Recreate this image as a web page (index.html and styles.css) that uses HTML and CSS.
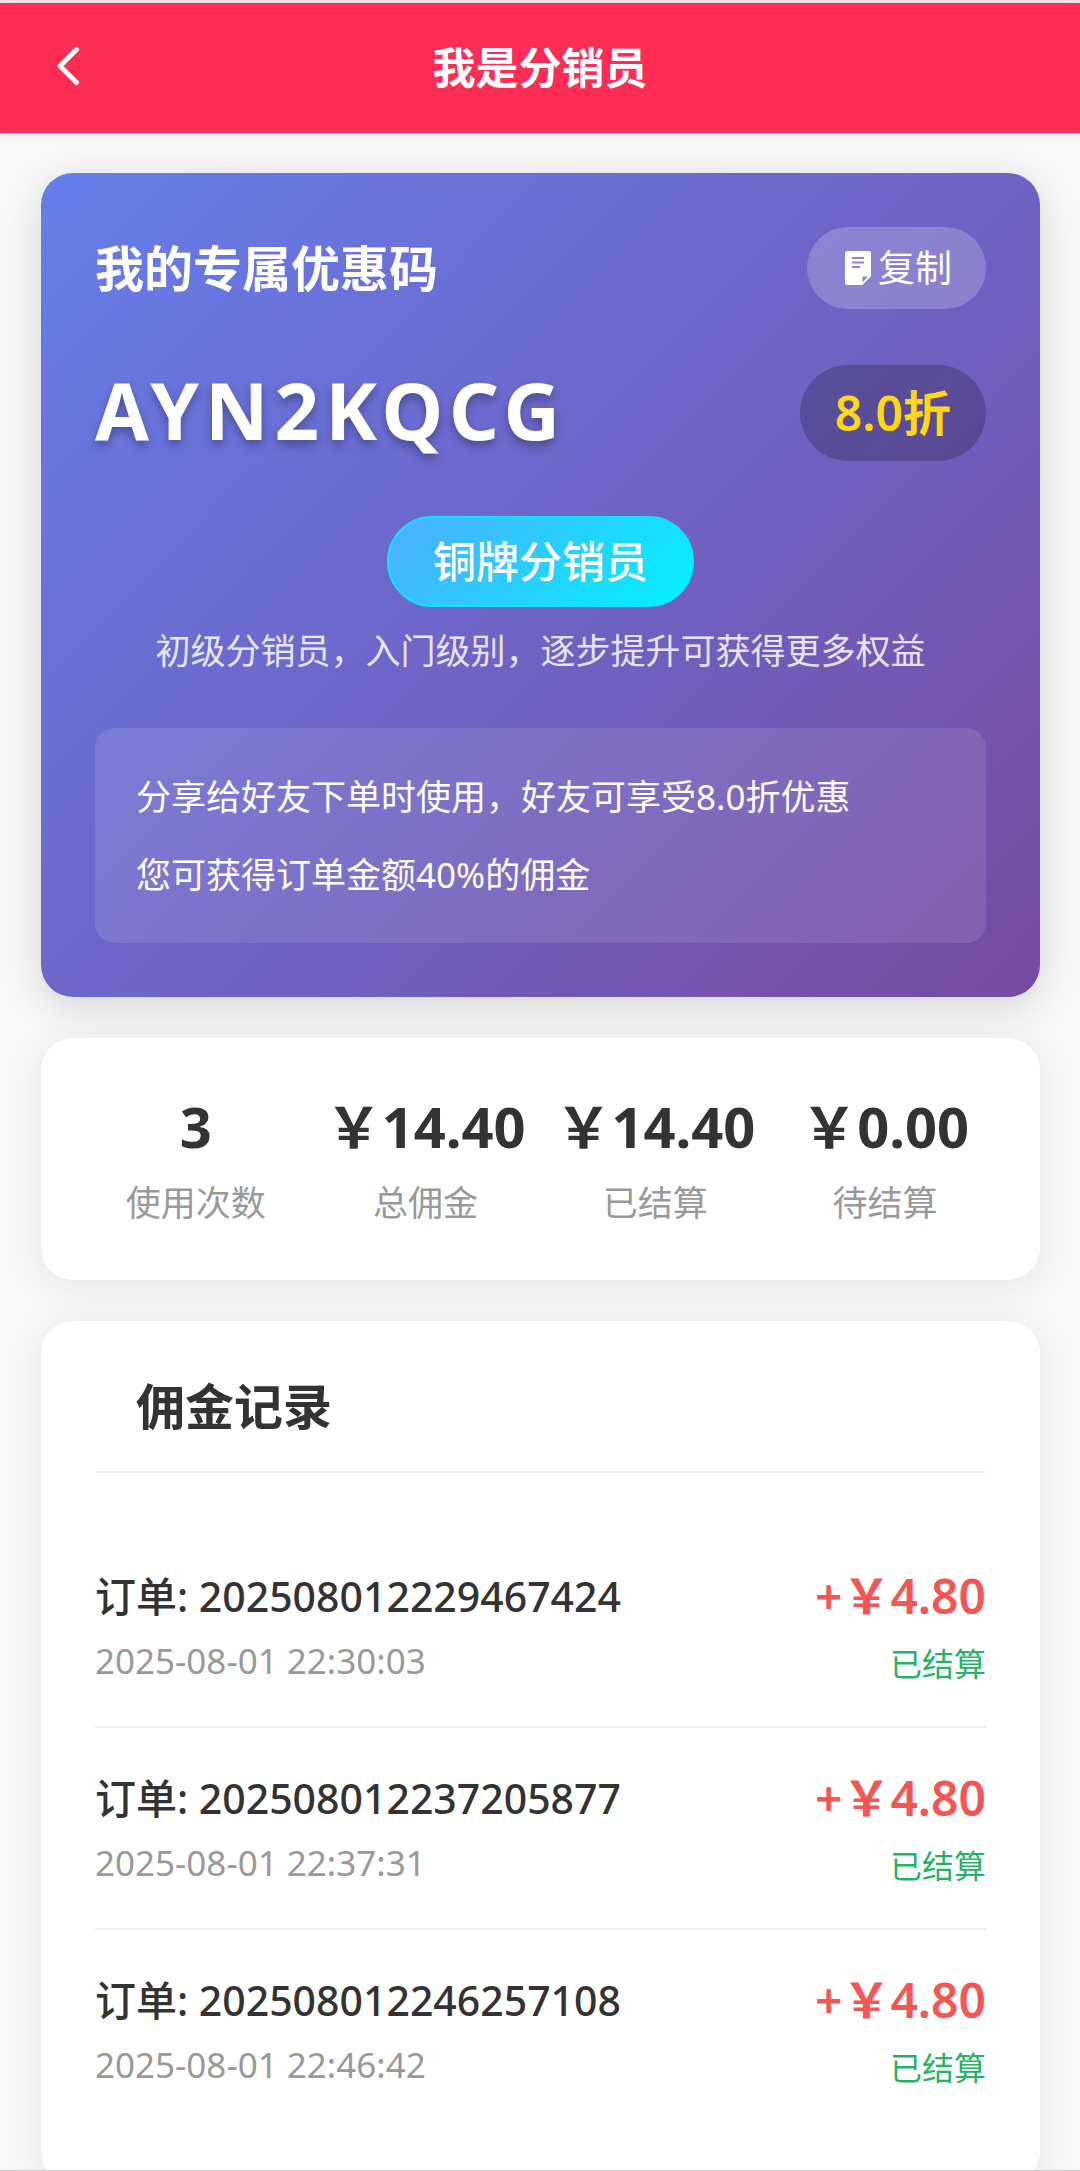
FILE: index.html
```html
<!DOCTYPE html>
<html lang="zh-CN">
<head>
<meta charset="utf-8">
<meta name="viewport" content="width=device-width, initial-scale=1">
<title>我是分销员</title>
<link rel="stylesheet" href="styles.css">
</head>
<body>
<div class="app">
  <header class="navbar">
    <button class="navbar-back" type="button" aria-label="返回">
      <svg width="24" height="40" viewBox="0 0 24 40" fill="none" stroke="#fff" stroke-width="5" stroke-linecap="round" stroke-linejoin="round"><path d="M20.500 3.500 4 20l16.500 16.500"/></svg>
    </button>
    <h1 class="navbar-title">我是分销员</h1>
  </header>

  <main class="content">
    <section class="coupon">
      <div class="coupon-row">
        <h2 class="coupon-title">我的专属优惠码</h2>
        <button class="copy-button" type="button">
          <svg width="26" height="34" viewBox="0 0 26 34"><path fill="#fff" fill-rule="evenodd" d="M2 0h22a2 2 0 0 1 2 2v23l-8.500 9H2a2 2 0 0 1-2-2V2a2 2 0 0 1 2-2Zm5 6v2h12V6Zm0 4.500v2h12v-2Zm0 4.500v2h8v-2Zm10.500 10.500v6l5.500-6Z"/></svg>
          <span>复制</span>
        </button>
      </div>
      <div class="coupon-row coupon-row-code">
        <strong class="coupon-code">AYN2KQCG</strong>
        <span class="discount">8.0折</span>
      </div>
      <div class="level">
        <span class="level-badge">铜牌分销员</span>
        <p class="level-text">初级分销员，入门级别，逐步提升可获得更多权益</p>
      </div>
      <div class="tips">
        <p>分享给好友下单时使用，好友可享受8.0折优惠</p>
        <p>您可获得订单金额40%的佣金</p>
      </div>
    </section>

    <section class="panel stats">
      <div class="stat"><strong>3</strong><span>使用次数</span></div>
      <div class="stat"><strong>￥14.40</strong><span>总佣金</span></div>
      <div class="stat"><strong>￥14.40</strong><span>已结算</span></div>
      <div class="stat"><strong>￥0.00</strong><span>待结算</span></div>
    </section>

    <section class="panel records">
      <h2 class="records-title">佣金记录</h2>
      <ul class="record-list">
        <li class="record">
          <div class="record-info"><span class="record-order">订单: 202508012229467424</span><time class="record-time">2025-08-01 22:30:03</time></div>
          <div class="record-result"><span class="record-amount">+￥4.80</span><span class="record-status">已结算</span></div>
        </li>
        <li class="record">
          <div class="record-info"><span class="record-order">订单: 202508012237205877</span><time class="record-time">2025-08-01 22:37:31</time></div>
          <div class="record-result"><span class="record-amount">+￥4.80</span><span class="record-status">已结算</span></div>
        </li>
        <li class="record">
          <div class="record-info"><span class="record-order">订单: 202508012246257108</span><time class="record-time">2025-08-01 22:46:42</time></div>
          <div class="record-result"><span class="record-amount">+￥4.80</span><span class="record-status">已结算</span></div>
        </li>
      </ul>
    </section>
  </main>
</div>
</body>
</html>
```
FILE: styles.css
```css
* {
  box-sizing: border-box;
}

body,
h1,
h2,
p,
ul {
  margin: 0;
  padding: 0;
}

body {
  background: #f8f8f8;
  color: #333;
  font-family: "Noto Sans", "Noto Sans CJK SC", sans-serif;
  font-size: 35px;
}

button {
  border: 0;
  padding: 0;
  color: inherit;
  font: inherit;
  cursor: pointer;
}

svg {
  display: block;
}

.app {
  display: flex;
  flex-direction: column;
  height: 100vh;
  border-top: 3px solid #ebe6e8;
  border-bottom: 1px solid #c8c8c8;
}

/* Top bar */
.navbar {
  position: relative;
  z-index: 1;
  flex: none;
  display: grid;
  grid-template-columns: 80px 1fr 80px;
  align-items: center;
  height: 130px;
  padding: 0 16px;
  background: #ff2c55;
  color: #fff;
  box-shadow: 0 2px 12px rgba(0, 0, 0, 0.06);
}

.navbar-back {
  display: flex;
  align-items: center;
  justify-content: center;
  height: 80px;
  padding: 0 0 4px 24px;
  background: none;
}

.navbar-title {
  font-size: 43px;
  font-weight: 700;
  line-height: 64px;
  text-align: center;
}

.content {
  flex: 1;
  min-height: 0;
  display: flex;
  flex-direction: column;
  gap: 41px;
  padding: 40px 40px 0 41px;
  overflow-y: auto;
  scrollbar-width: none;
}

.content > * {
  flex: none;
}

/* Coupon card */
.coupon {
  padding: 54px;
  border-radius: 32px;
  background: linear-gradient(135deg, #667eea 0%, #764ba2 100%);
  box-shadow: 0 10px 42px rgba(0, 0, 0, 0.15);
  color: #fff;
}

.coupon-row {
  display: flex;
  align-items: center;
  justify-content: space-between;
}

.coupon-row-code {
  margin-top: 56px;
}

.coupon-title {
  font-size: 49px;
  font-weight: 700;
  line-height: 72px;
}

.copy-button {
  display: flex;
  align-items: center;
  gap: 7px;
  height: 82px;
  padding: 0 34px 0 38px;
  border-radius: 41px;
  background: rgba(255, 255, 255, 0.2);
  font-size: 37px;
  line-height: 56px;
}

.coupon-code {
  padding-bottom: 6px;
  font-size: 78px;
  font-weight: 700;
  line-height: 90px;
  letter-spacing: 6px;
  text-shadow: 0 5px 10px rgba(0, 0, 0, 0.3);
}

.discount {
  padding: 0 35px;
  border-radius: 48px;
  background: rgba(0, 0, 0, 0.2);
  color: #ffd712;
  font-size: 48px;
  font-weight: 600;
  line-height: 96px;
}

.level {
  display: flex;
  flex-direction: column;
  align-items: center;
  gap: 18px;
  margin-top: 55px;
}

.level-badge {
  padding: 0 44px;
  border: 2px solid #10e4fe;
  border-radius: 46px;
  background: linear-gradient(135deg, #4facfe 0%, #00f2fe 100%);
  font-size: 43px;
  font-weight: 500;
  line-height: 87px;
}

.level-text {
  color: rgba(255, 255, 255, 0.85);
  line-height: 52px;
}

.tips {
  margin-top: 51px;
  padding: 30px 41px 29px;
  border-radius: 20px;
  background: rgba(255, 255, 255, 0.1);
  line-height: 78px;
}

/* White cards */
.panel {
  border-radius: 32px;
  background: #fff;
  box-shadow: 0 6px 42px rgba(0, 0, 0, 0.08);
}

.stats {
  display: grid;
  grid-template-columns: repeat(4, 1fr);
  padding: 52px 40px 51px;
}

.stat {
  display: flex;
  flex-direction: column;
  align-items: center;
  gap: 15px;
}

.stat strong {
  font-size: 56px;
  font-weight: 700;
  line-height: 72px;
  white-space: nowrap;
}

.stat span {
  color: #999;
  line-height: 52px;
}

.records {
  padding: 50px 54px 54px;
}

.records-title {
  padding: 0 41px 30px;
  border-bottom: 2px solid #f0f0f0;
  font-size: 49px;
  font-weight: 700;
  line-height: 70px;
}

.record-list {
  margin-top: 53px;
  list-style: none;
}

.record {
  display: flex;
  justify-content: space-between;
  padding: 38px 0 42px;
  border-bottom: 2px solid #f0f0f0;
}

.record:last-child {
  border-bottom: 0;
}

.record-info,
.record-result {
  display: flex;
  flex-direction: column;
}

.record-info {
  gap: 10px;
}

.record-order {
  font-size: 41px;
  font-weight: 500;
  line-height: 64px;
}

.record-time {
  color: #999;
  font-size: 35px;
  line-height: 46px;
}

.record-result {
  align-items: flex-end;
  gap: 16px;
}

.record-amount {
  color: #f65555;
  font-size: 48px;
  font-weight: 600;
  line-height: 64px;
}

.record-status {
  color: #1fb565;
  font-size: 32px;
  line-height: 40px;
}
```
